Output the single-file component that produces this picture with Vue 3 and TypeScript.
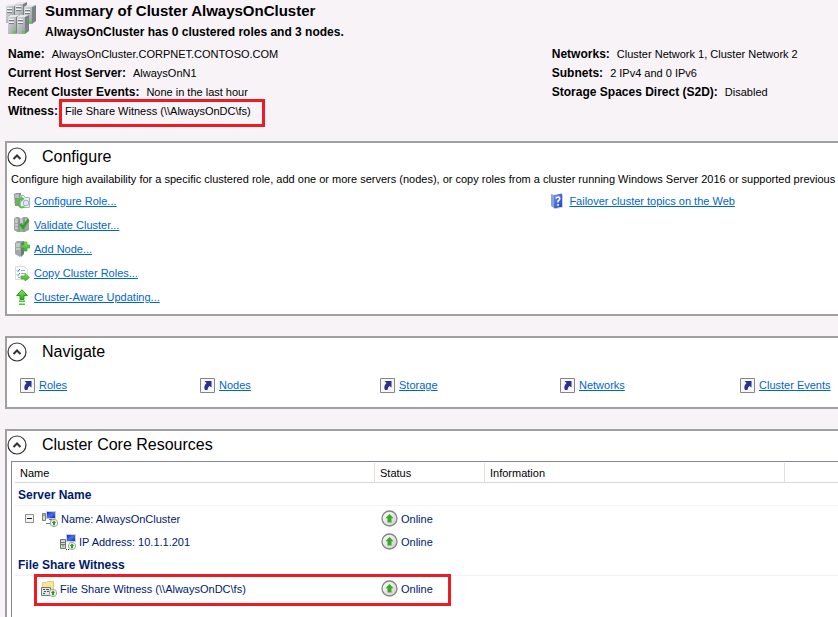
<script setup lang="ts">
import { ref } from 'vue'

interface Fact {
  label: string
  value: string
  marked?: boolean
}

const identity: Fact[] = [
  { label: 'Name:', value: 'AlwaysOnCluster.CORPNET.CONTOSO.COM' },
  { label: 'Current Host Server:', value: 'AlwaysOnN1' },
  { label: 'Recent Cluster Events:', value: 'None in the last hour' },
  { label: 'Witness:', value: 'File Share Witness (\\\\AlwaysOnDC\\fs)', marked: true },
]

const network: Fact[] = [
  { label: 'Networks:', value: 'Cluster Network 1, Cluster Network 2' },
  { label: 'Subnets:', value: '2 IPv4 and 0 IPv6' },
  { label: 'Storage Spaces Direct (S2D):', value: 'Disabled' },
]

const actions = [
  { icon: 'role', text: 'Configure Role...' },
  { icon: 'validate', text: 'Validate Cluster...' },
  { icon: 'add', text: 'Add Node...' },
  { icon: 'copy', text: 'Copy Cluster Roles...' },
  { icon: 'update', text: 'Cluster-Aware Updating...' },
]

const places = ['Roles', 'Nodes', 'Storage', 'Networks', 'Cluster Events']

const open = ref({ configure: true, navigate: true, resources: true })
const expanded = ref(true)
</script>

<template>
  <main class="page">
    <svg class="defs" width="0" height="0" aria-hidden="true">
      <defs>
        <linearGradient id="steel" x1="0" x2="1" y1="0" y2="1">
          <stop offset="0" stop-color="#d9dcde" />
          <stop offset="1" stop-color="#969ca0" />
        </linearGradient>
        <linearGradient id="leaf" x1="0" x2="0" y1="0" y2="1">
          <stop offset="0" stop-color="#8be36a" />
          <stop offset="1" stop-color="#2fae1c" />
        </linearGradient>
        <linearGradient id="book" x1="0" x2="1" y1="0" y2="1">
          <stop offset="0" stop-color="#6f97f0" />
          <stop offset="1" stop-color="#1c3fc0" />
        </linearGradient>
        <linearGradient id="disc" x1="0" x2="1" y1="0" y2="1">
          <stop offset="0" stop-color="#ffffff" />
          <stop offset="1" stop-color="#cdcdcd" />
        </linearGradient>
        <linearGradient id="screen" x1="0" x2="1" y1="0" y2="1">
          <stop offset="0" stop-color="#0a22b8" />
          <stop offset="0.5" stop-color="#4a70f0" />
          <stop offset="1" stop-color="#0a1e9c" />
        </linearGradient>
        <g id="tower">
          <path d="M0 2 L3 0 H12 L8 2Z" fill="#e6e9ea" />
          <path d="M8 2 L12 0 V16 L8 19Z" fill="#7b8286" />
          <path d="M0 2H8V19H0Z" fill="url(#steel)" />
          <path d="M1 5.500H6M1 8.500H6" stroke="#777e82" />
          <path d="M1 4.500H6M1 7.500H6" stroke="#f4f6f6" />
          <path d="M5 16h3v2h-3z" fill="#5bd02c" />
        </g>
        <g id="badge">
          <circle cx="12" cy="12" r="3.700" fill="#f2f4f2" stroke="#a0a6a0" />
          <path d="M12 9.500 L14.300 12 H13 V14.300 H11 V12 H9.700Z" fill="#28a018" />
        </g>
      </defs>
    </svg>

    <header class="summary">
      <div class="title">
        <svg width="34" height="34" viewBox="0 0 34 34" aria-hidden="true">
          <use href="#tower" x="1" y="3" />
          <use href="#tower" x="10" y="1" />
          <use href="#tower" x="19" y="4" />
          <use href="#tower" x="3" y="14" />
          <use href="#tower" x="12" y="14" />
        </svg>
        <div>
          <h1>Summary of Cluster AlwaysOnCluster</h1>
          <p>AlwaysOnCluster has 0 clustered roles and 3 nodes.</p>
        </div>
      </div>
      <div class="facts">
        <dl v-for="(group, i) in [identity, network]" :key="i">
          <div v-for="fact in group" :key="fact.label" class="fact">
            <dt>{{ fact.label }}</dt>
            <dd :class="{ marked: fact.marked }">{{ fact.value }}</dd>
          </div>
        </dl>
      </div>
    </header>

    <section class="panel configure">
      <h2>
        <button type="button" aria-label="Toggle Configure" @click="open.configure = !open.configure">
          <svg width="20" height="20" viewBox="0 0 20 20">
            <circle cx="10" cy="10" r="9" fill="#fff" stroke="#333" stroke-width="1.200" />
            <path d="M6.500 12 L10 8.500 L13.500 12" fill="none" stroke="#333" stroke-width="2" />
          </svg>
        </button>
        Configure
      </h2>
      <template v-if="open.configure">
        <p class="about">Configure high availability for a specific clustered role, add one or more servers (nodes), or copy roles from a cluster running Windows Server 2016 or supported previous v</p>
        <div class="links">
          <ul>
            <li v-for="item in actions" :key="item.icon">
              <svg width="16" height="16" viewBox="0 0 16 16" aria-hidden="true">
                <template v-if="item.icon === 'role'">
                  <path d="M0 1 L2 0H7L6 13H1Z" fill="#8b9195" />
                  <path d="M1 2H5M1 4H5" stroke="#e6e8e8" />
                  <path d="M6.500 2.500H10L11 4.500H15.500V14.500H6.500Z" fill="#eaf0f4" stroke="#a9b3b9" />
                  <circle cx="12" cy="10" r="2.800" fill="#dcebf4" stroke="#9bb0bf" />
                  <path d="M2.500 9.500 Q3 5.500 7.500 6" fill="none" stroke="#54c83c" stroke-width="2" />
                  <path d="M7 3 L10.500 6 L7 9ZM0 9.500H6L3 12.500Z" fill="#54c83c" />
                  <path d="M5 13 Q7 15.500 10.500 13.500" fill="none" stroke="#54c83c" stroke-width="2" />
                </template>
                <template v-else-if="item.icon === 'validate'">
                  <path d="M0 2 L2 0H5L7 2 L9 0H13L15 2V13L11 15H3L0 13Z" fill="#a1a6a9" />
                  <path d="M1 3H4M6 3H9M11 3H14M1 5H4M6 5H9M1 8H4M1 11H4" stroke="#e6e8e8" />
                  <path d="M5 2V14M10 2V14" stroke="#7b8185" />
                  <path d="M6.500 7 L9 10.500 L14.500 2.500" fill="none" stroke="#27a51b" stroke-width="2.500" />
                  <path d="M4 14h2M9 14h2" stroke="#53d02c" stroke-width="2" />
                </template>
                <template v-else-if="item.icon === 'add'">
                  <path d="M1 2 L3 0H10L9 13L6 16L1 13Z" fill="#a0a6aa" />
                  <path d="M7 2 L10 0V13L7 16Z" fill="#70777b" />
                  <path d="M2 3H6M2 5H6M2 8H6" stroke="#e6e9ea" />
                  <path d="M10 1H13V4H16V7H13V10H10V7H7V4H10Z" fill="url(#leaf)" stroke="#3aae2a" stroke-width="0.700" />
                </template>
                <template v-else-if="item.icon === 'copy'">
                  <path d="M1.500 1.500H10.500L13.500 4.500V14.500H1.500Z" fill="#fafbfc" stroke="#dadee2" />
                  <path d="M3 5.500 L4 6.500 L6 4M3 9.500 L4 10.500 L6 8" fill="none" stroke="#3b82bd" />
                  <path d="M7 5.500H11M7 8.500H11M4 12.500H6" stroke="#a2acb5" />
                  <path d="M7 11H11V8.500L15.500 12.500L11 16V14H7Z" fill="url(#leaf)" stroke="#3aa728" stroke-width="0.700" />
                </template>
                <template v-else>
                  <path d="M8 0.700 L13.300 6.500H10V10.500H6V6.500H2.700Z" fill="url(#leaf)" stroke="#2f9a22" />
                  <path d="M5 11.500H11V13H5ZM5 14.500H11V16H5Z" fill="#4cc236" />
                </template>
              </svg>
              <a href="#">{{ item.text }}</a>
            </li>
          </ul>
          <ul>
            <li>
              <svg width="14" height="16" viewBox="0 0 14 16" aria-hidden="true">
                <path d="M0 1 L3 2V15L0 13Z" fill="#8aa0d8" />
                <path d="M3 2 L11 0.500V14L3 15.500Z" fill="url(#book)" />
                <path d="M11 1 L12 2V14.500L5 16L3 15.500L11 14Z" fill="#c6d0e8" />
                <path d="M5 5.500 Q5.500 4 7.200 4 Q9 4.200 8.700 6 Q8.500 7 7 8V9.500" fill="none" stroke="#fff" stroke-width="1.500" />
                <path d="M6.200 11h1.700v1.700H6.200z" fill="#fff" />
              </svg>
              <a href="#">Failover cluster topics on the Web</a>
            </li>
          </ul>
        </div>
      </template>
    </section>

    <section class="panel navigate">
      <h2>
        <button type="button" aria-label="Toggle Navigate" @click="open.navigate = !open.navigate">
          <svg width="20" height="20" viewBox="0 0 20 20">
            <circle cx="10" cy="10" r="9" fill="#fff" stroke="#333" stroke-width="1.200" />
            <path d="M6.500 12 L10 8.500 L13.500 12" fill="none" stroke="#333" stroke-width="2" />
          </svg>
        </button>
        Navigate
      </h2>
      <nav v-if="open.navigate">
        <span v-for="place in places" :key="place">
          <svg width="15" height="15" viewBox="0 0 15 15" aria-hidden="true">
            <path d="M0.500 0.500H14.500V14.500H0.500Z" fill="#f7f7fb" stroke="#85858c" />
            <path d="M4.500 3H11.500V9.500L9.500 8Q7.500 9.500 7.500 12H5Q3 8.500 6.500 5Z" fill="#2e2f8f" />
          </svg>
          <a href="#">{{ place }}</a>
        </span>
      </nav>
    </section>

    <section class="panel resources">
      <h2>
        <button type="button" aria-label="Toggle Cluster Core Resources" @click="open.resources = !open.resources">
          <svg width="20" height="20" viewBox="0 0 20 20">
            <circle cx="10" cy="10" r="9" fill="#fff" stroke="#333" stroke-width="1.200" />
            <path d="M6.500 12 L10 8.500 L13.500 12" fill="none" stroke="#333" stroke-width="2" />
          </svg>
        </button>
        Cluster Core Resources
      </h2>
      <div v-if="open.resources" class="list">
        <table>
          <colgroup>
            <col class="col-name" />
            <col class="col-status" />
            <col class="col-info" />
            <col />
          </colgroup>
          <thead>
            <tr>
              <th>Name</th>
              <th>Status</th>
              <th>Information</th>
              <td></td>
            </tr>
          </thead>
          <tbody>
            <tr class="group"><th colspan="4"><div>Server Name</div></th></tr>
            <tr>
              <td>
                <div class="item">
                  <button class="twisty" type="button" aria-label="Expand or collapse" @click="expanded = !expanded">
                    <svg width="9" height="9" viewBox="0 0 9 9">
                      <path d="M0.500 0.500H8.500V8.500H0.500Z" fill="#f4f4f4" stroke="#8b8f96" />
                      <path d="M2 4.500H7" stroke="#222" />
                    </svg>
                  </button>
                  <svg width="16" height="16" viewBox="0 0 16 16" aria-hidden="true">
                    <path d="M0.500 2.500H3.500V9.500H0.500Z" fill="#d5d9d2" stroke="#7b837c" />
                    <path d="M1 4h2" stroke="#3ba52c" />
                    <path d="M4.500 0.500H13.500V7.500H4.500Z" fill="url(#screen)" stroke="#c8ccd8" />
                    <path d="M7 8.500H11M9 8V12M4 12.500H10" stroke="#6f7479" />
                    <use href="#badge" />
                  </svg>
                  Name: AlwaysOnCluster
                </div>
              </td>
              <td>
                <div class="state">
                  <svg width="17" height="17" viewBox="0 0 17 17" aria-hidden="true">
                    <circle cx="8.500" cy="8.500" r="7.500" fill="url(#disc)" stroke="#858585" stroke-width="1.300" />
                    <path d="M8.500 4 L12.500 8.300H10.500V12.500H6.500V8.300H4.500Z" fill="#35ab20" />
                  </svg>
                  Online
                </div>
              </td>
              <td></td>
              <td></td>
            </tr>
            <tr v-if="expanded">
              <td>
                <div class="item child">
                  <svg width="16" height="16" viewBox="0 0 16 16" aria-hidden="true">
                    <path d="M6.500 0.500H15.500V7.500H6.500Z" fill="url(#screen)" stroke="#c8ccd8" />
                    <path d="M0.500 5.500H5.500V14.500H0.500Z" fill="#d5d9d2" stroke="#6f776f" />
                    <path d="M1 8.500H5M1 10.500H5" stroke="#727972" />
                    <path d="M2 12h2" stroke="#3ba52c" />
                    <path d="M6 15.500h3" stroke="#333" stroke-dasharray="1 1" />
                    <use href="#badge" />
                  </svg>
                  IP Address: 10.1.1.201
                </div>
              </td>
              <td>
                <div class="state">
                  <svg width="17" height="17" viewBox="0 0 17 17" aria-hidden="true">
                    <circle cx="8.500" cy="8.500" r="7.500" fill="url(#disc)" stroke="#858585" stroke-width="1.300" />
                    <path d="M8.500 4 L12.500 8.300H10.500V12.500H6.500V8.300H4.500Z" fill="#35ab20" />
                  </svg>
                  Online
                </div>
              </td>
              <td></td>
              <td></td>
            </tr>
            <tr class="group"><th colspan="4"><div>File Share Witness</div></th></tr>
            <tr class="boxed">
              <td>
                <div class="item leaf">
                  <svg width="16" height="16" viewBox="0 0 16 16" aria-hidden="true">
                    <path d="M1.500 1.500H5.500L6.500 0.500H12.500V11.500H1.500Z" fill="#fbe594" stroke="#e6c878" />
                    <path d="M0.500 6.500H9.500V14.500H0.500Z" fill="#e4e7e9" stroke="#73787c" />
                    <path d="M2 8.500H4M5 8.500H8M3 10.500H5M6 10.500H8M2 12.500H4" stroke="#4b4f58" />
                    <use href="#badge" />
                  </svg>
                  File Share Witness (\\AlwaysOnDC\fs)
                </div>
              </td>
              <td>
                <div class="state">
                  <svg width="17" height="17" viewBox="0 0 17 17" aria-hidden="true">
                    <circle cx="8.500" cy="8.500" r="7.500" fill="url(#disc)" stroke="#858585" stroke-width="1.300" />
                    <path d="M8.500 4 L12.500 8.300H10.500V12.500H6.500V8.300H4.500Z" fill="#35ab20" />
                  </svg>
                  Online
                </div>
              </td>
              <td></td>
              <td></td>
            </tr>
          </tbody>
        </table>
      </div>
    </section>
  </main>
</template>

<style>
body {
  background: #f7f3f7;
}
</style>

<style scoped>
.page {
  box-sizing: border-box;
  display: flex;
  flex-direction: column;
  min-height: 100vh;
  padding-left: 5px;
  gap: 20px;
  overflow: hidden;
  color: #000;
  font-family: "Liberation Sans", Arial, sans-serif;
  font-size: 11px;
  white-space: nowrap;
}

.defs {
  position: absolute;
}

h1,
h2,
p,
dl,
dd,
ul {
  margin: 0;
  padding: 0;
}

svg {
  display: block;
  flex: none;
}

button {
  padding: 0;
  border: 0;
  background: none;
}

a {
  color: #0066cc;
}

.title {
  display: flex;
  gap: 6px;
  height: 44px;
  padding-top: 1px;
  box-sizing: border-box;
}

h1 {
  font-size: 15px;
  line-height: 20px;
}

.title p {
  font-size: 12px;
  font-weight: bold;
  line-height: 22px;
}

.facts,
.links {
  display: grid;
  grid-template-columns: 19fr 10fr;
}

.facts {
  padding-left: 3px;
}

.fact {
  display: flex;
  align-items: baseline;
  gap: 7px;
  line-height: 20px;
  height: 19px;
}

.fact dt {
  font-size: 12px;
  font-weight: bold;
}

.marked {
  position: relative;
}

.marked::after {
  content: "";
  position: absolute;
  inset: -2px -14px -6px -6px;
  border: 3px solid #ed1c24;
}

.panel {
  border: 2px solid #a0a0a0;
  border-right: 0;
  background: #fff;
}

.summary + .panel {
  margin-top: 1px;
}

h2 {
  display: flex;
  align-items: center;
  gap: 15px;
  height: 27px;
  font-size: 16px;
  font-weight: normal;
}

.about {
  padding-left: 4px;
  line-height: 19px;
}

.links {
  grid-template-columns: 15fr 8fr;
  padding: 0 0 5px 7px;
}

.links li {
  display: flex;
  align-items: center;
  gap: 4px;
  height: 24px;
}

nav {
  display: grid;
  grid-template-columns: repeat(5, 180px);
  padding: 4px 0 6px 13px;
}

nav span {
  display: flex;
  align-items: center;
  gap: 4px;
  height: 32px;
}

.resources {
  flex: 1;
  display: flex;
  flex-direction: column;
  border-bottom: 0;
}

.list {
  flex: 1;
  margin: 3px 0 0 4px;
  padding: 1px 0 0 3px;
  border: 1px solid #828790;
  border-width: 1px 0 0 1px;
}

table {
  width: 100%;
  table-layout: fixed;
  border-collapse: separate;
  border-spacing: 0;
  color: #001a6e;
}

.col-name {
  width: 360px;
}

.col-status {
  width: 110px;
}

.col-info {
  width: 300px;
}

th,
td {
  padding: 0;
  font-weight: normal;
  text-align: left;
}

thead th,
thead td {
  box-sizing: border-box;
  height: 20px;
  padding-left: 5px;
  border-bottom: 1px solid #d5d9df;
  color: #000;
}

thead th {
  border-right: 1px solid #dfe0e6;
}

tbody td {
  height: 23px;
}

.group th {
  height: 24px;
  vertical-align: top;
  font-size: 12px;
  font-weight: bold;
}

.group div {
  padding: 2px 0 0 3px;
  line-height: 20px;
  border-bottom: 1px solid #f2f2f4;
}

.item,
.state {
  display: flex;
  align-items: center;
  gap: 3px;
}

.item {
  padding-left: 10px;
}

.twisty {
  margin-right: 5px;
}

.child {
  padding-left: 45px;
}

.leaf {
  padding-left: 26px;
}

.state {
  padding-left: 6px;
}

.boxed td {
  position: relative;
}

.boxed td:first-child::after {
  content: "";
  position: absolute;
  inset: -3px -76px -6px 19px;
  border: 3px solid #ed1c24;
}
</style>
